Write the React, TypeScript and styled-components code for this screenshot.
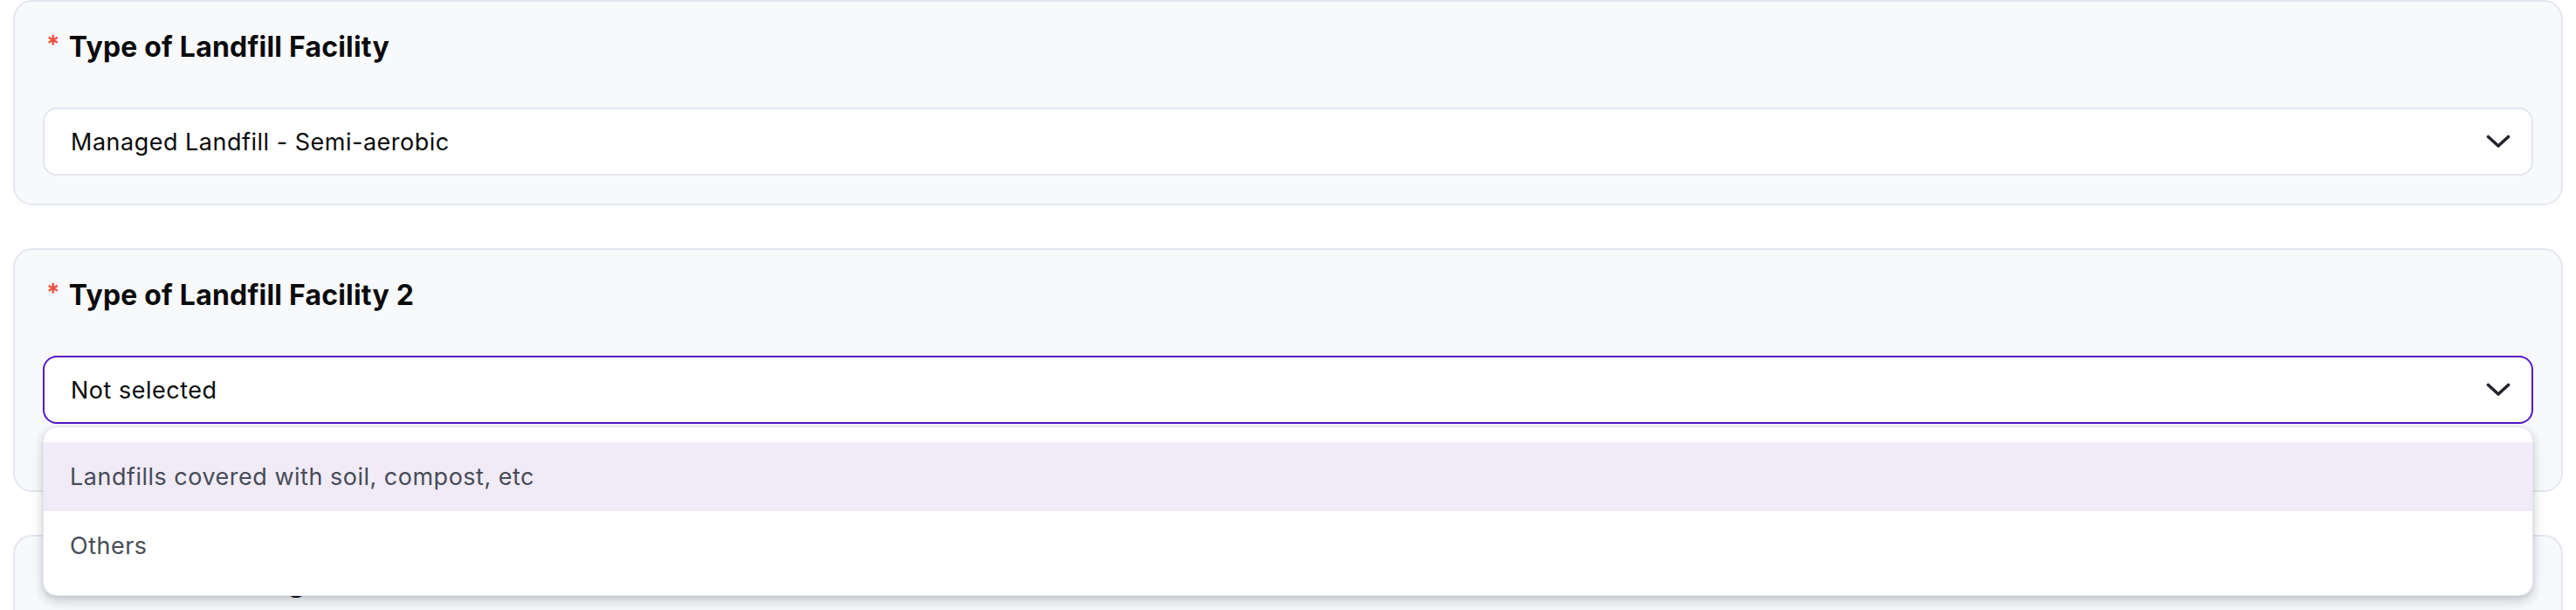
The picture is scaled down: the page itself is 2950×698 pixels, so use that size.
import React from "react";
import styled, { createGlobalStyle } from "styled-components";

const Global = createGlobalStyle`
  html, body {
    margin: 0;
    padding: 0;
    background: #ffffff;
    overflow: hidden;
  }
  * { box-sizing: border-box; }
`;

const Page = styled.div`
  display: flex;
  flex-direction: column;
  gap: 49px;
  padding: 0 15px;
  font-family: Inter, "Noto Sans", sans-serif;
`;

const Card = styled.section<{ $raised?: boolean }>`
  position: relative;
  z-index: ${(p) => (p.$raised ? 2 : 1)};
  display: flex;
  flex-direction: column;
  background: #f8f9fb;
  border: 2px solid #e4e7ef;
  border-radius: 22px;
  padding: 32px;
`;

const Label = styled.div`
  display: flex;
  align-items: flex-start;
  height: 40px;
  line-height: 40px;
  font-family: Inter, "Noto Sans", sans-serif;
  font-weight: 700;
  font-size: 32px;
  color: #0b0b0c;
  letter-spacing: 0.2px;
  margin-bottom: 49px;
`;

const Star = styled.span`
  color: #ef4f3b;
  font-size: 28px;
  font-weight: 700;
  line-height: 34px;
  margin: 0 10px 0 4px;
`;

const Field = styled.div`
  position: relative;
`;

const SelectBox = styled.div<{ $focused?: boolean }>`
  display: flex;
  align-items: center;
  justify-content: space-between;
  height: 78px;
  padding: 0 24px 0 30px;
  background: #ffffff;
  border: 2px solid ${(p) => (p.$focused ? "#5617c3" : "#e2e6ee")};
  border-radius: 16px;
  font-size: 27px;
  letter-spacing: 0.5px;
  color: #0a0a0a;
`;

const Chevron = () => (
  <svg width="28" height="16" viewBox="0 0 28 16" fill="none">
    <polyline
      points="2.5,2.5 14,13 25.5,2.5"
      stroke="#23252b"
      strokeWidth="3.6"
      strokeLinecap="round"
      strokeLinejoin="round"
    />
  </svg>
);

const ErrorText = styled.div`
  height: 44px;
  padding-top: 10px;
  font-size: 22px;
  color: #e5484d;
`;

const Menu = styled.ul`
  position: absolute;
  top: calc(100% + 3px);
  left: 0;
  right: 0;
  margin: 0;
  padding: 17px 0;
  list-style: none;
  background: #ffffff;
  border: 1px solid #e3e6ed;
  border-radius: 16px;
  box-shadow: 0 6px 14px rgba(15, 23, 42, 0.2), 0 2px 4px rgba(15, 23, 42, 0.08);
  z-index: 10;
`;

const Option = styled.li<{ $active?: boolean }>`
  display: flex;
  align-items: center;
  height: 79px;
  padding: 0 30px;
  font-size: 27px;
  letter-spacing: 0.5px;
  color: #474c57;
  background: ${(p) => (p.$active ? "#f1ebf8" : "transparent")};
`;

export default function App() {
  return (
    <>
      <Global />
      <Page>
        <Card>
          <Label>
            <Star>*</Star>Type of Landfill Facility
          </Label>
          <Field>
            <SelectBox>
              <span>Managed Landfill - Semi-aerobic</span>
              <Chevron />
            </SelectBox>
          </Field>
        </Card>

        <Card $raised>
          <Label>
            <Star>*</Star>Type of Landfill Facility 2
          </Label>
          <Field>
            <SelectBox $focused>
              <span>Not selected</span>
              <Chevron />
            </SelectBox>
            <Menu>
              <Option $active>Landfills covered with soil, compost, etc</Option>
              <Option>Others</Option>
            </Menu>
          </Field>
          <ErrorText>This field is required</ErrorText>
        </Card>

        <Card>
          <Label>
            <Star>*</Star>Total Amount (kg)
          </Label>
          <Field>
            <SelectBox>
              <span>Not selected</span>
              <Chevron />
            </SelectBox>
          </Field>
        </Card>
      </Page>
    </>
  );
}
